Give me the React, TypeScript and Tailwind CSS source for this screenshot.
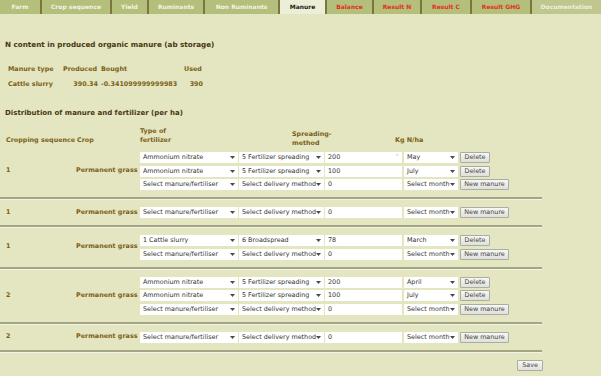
import React from 'react';

type Row = { fert: string; method: string; kg: string; month: string; btn: string; dots?: boolean };
type Group = { seq: string; rows: Row[] };

const tabs = [
  { label: 'Farm', cls: 'w-[40px] text-[#f4f3e2]' },
  { label: 'Crop sequence', cls: 'w-[70px] text-[#f4f3e2]' },
  { label: 'Yield', cls: 'w-[37px] text-[#f4f3e2]' },
  { label: 'Ruminants', cls: 'w-[56px] text-[#f4f3e2]' },
  { label: 'Non Ruminants', cls: 'w-[75px] text-[#f4f3e2]' },
  { label: 'Manure', cls: 'w-[47px] text-[#1c1c10] bg-[#eceed7]' },
  { label: 'Balance', cls: 'w-[47px] text-[#e3301c]' },
  { label: 'Result N', cls: 'w-[48px] text-[#e3301c]' },
  { label: 'Result C', cls: 'w-[50px] text-[#e3301c]' },
  { label: 'Result GHG', cls: 'w-[60px] text-[#e3301c]' },
  { label: 'Documentation', cls: 'w-[71px] text-[#eef0dc] bg-[#bfc78e]' },
];

const empty: Row = {
  fert: 'Select manure/fertiliser',
  method: 'Select delivery method',
  kg: '0',
  month: 'Select month',
  btn: 'New manure',
};

const groups: Group[] = [
  {
    seq: '1',
    rows: [
      { fert: 'Ammonium nitrate', method: '5 Fertilizer spreading', kg: '200', month: 'May', btn: 'Delete', dots: true },
      { fert: 'Ammonium nitrate', method: '5 Fertilizer spreading', kg: '100', month: 'July', btn: 'Delete' },
      empty,
    ],
  },
  { seq: '1', rows: [empty] },
  {
    seq: '1',
    rows: [{ fert: '1 Cattle slurry', method: '6 Broadspread', kg: '78', month: 'March', btn: 'Delete' }, empty],
  },
  {
    seq: '2',
    rows: [
      { fert: 'Ammonium nitrate', method: '5 Fertilizer spreading', kg: '200', month: 'April', btn: 'Delete' },
      { fert: 'Ammonium nitrate', method: '5 Fertilizer spreading', kg: '100', month: 'July', btn: 'Delete' },
      empty,
    ],
  },
  { seq: '2', rows: [empty] },
];

function Select({ text, w }: { text: string; w: string }) {
  return (
    <div className={`relative h-[11px] bg-white pl-[3px] pr-[9px] overflow-hidden whitespace-nowrap leading-[11px] text-[6.4px] text-[#333333] ${w}`}>
      {text}
      <svg className="absolute right-[3px] top-[4px]" width="5" height="3" viewBox="0 0 5 3">
        <path d="M0 0H5L2.5 3Z" fill="#4a4a4a" />
      </svg>
    </div>
  );
}

function Button({ label, w }: { label: string; w: string }) {
  return (
    <button className={`h-[11px] rounded-[1px] border border-[#acaca6] bg-gradient-to-b from-[#f7f7f4] to-[#e0e1da] text-[6.4px] leading-[9px] text-[#454545] ${w}`}>
      {label}
    </button>
  );
}

function Separator() {
  return <div className="w-[542px] h-[3px] border-t-2 border-b border-t-[#a3a584] border-b-[#f3f4e4]" />;
}

export default function App() {
  return (
    <div className="w-[601px] h-[376px] bg-[#e3e6c0] font-['DejaVu_Sans',sans-serif] overflow-hidden">
      {/* Tabs */}
      <div className="flex h-[14px] bg-[#b4bf7b]">
        {tabs.map((t, i) => (
          <div
            key={t.label}
            className={`flex items-center justify-center font-bold text-[6px] leading-[14px] ${t.cls} ${i > 0 ? 'border-l-2 border-l-[#7a763f]' : ''}`}
          >
            {t.label}
          </div>
        ))}
      </div>

      <div className="mt-[26px] pl-[5px] font-bold text-[7.2px] leading-[10px] text-[#4a3712]">
        N content in produced organic manure (ab storage)
      </div>

      {/* Manure table */}
      <div className="mt-[14px] font-bold text-[6.4px] leading-[10px] text-[#7d5e17]">
        <div className="flex">
          <div className="w-[63px] pl-[8px]">Manure type</div>
          <div className="w-[38px]">Produced</div>
          <div className="w-[83px]">Bought</div>
          <div className="w-[19px]">Used</div>
        </div>
        <div className="flex mt-[5px]">
          <div className="w-[63px] pl-[8px]">Cattle slurry</div>
          <div className="w-[35px] text-right">390.34</div>
          <div className="w-[82px] pl-[3px]">-0.341099999999983</div>
          <div className="w-[23px] text-right">390</div>
        </div>
      </div>

      <div className="mt-[19px] pl-[5px] font-bold text-[7px] leading-[10px] text-[#4a3712]">
        Distribution of manure and fertilizer (per ha)
      </div>

      {/* Distribution header */}
      <div className="mt-[9px] flex h-[18px] font-bold text-[6.4px] leading-[8.5px] text-[#7d5e17]">
        <div className="w-[76px] pl-[6px] pt-[9px]">Cropping sequence</div>
        <div className="w-[64px] pt-[9px] pl-[1px]">Crop</div>
        <div className="w-[152px]">
          Type of
          <br />
          fertilizer
        </div>
        <div className="w-[103px] pt-[3px]">
          Spreading-
          <br />
          method
        </div>
        <div className="pt-[9px]">Kg N/ha</div>
      </div>

      {/* Groups */}
      {groups.map((g, gi) => (
        <div key={gi}>
          <div className="flex items-center py-[7px] font-bold text-[6.4px] text-[#7d5e17]">
            <div className="w-[76px] pl-[6px]">{g.seq}</div>
            <div className="w-[64px] whitespace-nowrap">Permanent grass</div>
            <div className="flex flex-col gap-[2.5px] font-normal">
              {g.rows.map((r, ri) => (
                <div key={ri} className="flex items-center">
                  <Select text={r.fert} w="w-[98px]" />
                  <div className="w-[1px]" />
                  <Select text={r.method} w="w-[85px]" />
                  <div className="w-[1px]" />
                  <div className="relative h-[11px] w-[77px] bg-white pl-[3px] leading-[11px] text-[6.4px] text-[#333333]">
                    {r.kg}
                    {r.dots && (
                      <span className="absolute right-[4px] top-[-3px] text-[6px] text-[#9a9a9a] tracking-[-1px]">···</span>
                    )}
                  </div>
                  <div className="w-[2px]" />
                  <Select text={r.month} w="w-[54px]" />
                  <div className="w-[2px]" />
                  <Button label={r.btn} w={r.btn === 'Delete' ? 'w-[30px]' : 'w-[49px]'} />
                </div>
              ))}
            </div>
          </div>
          <Separator />
        </div>
      ))}

      <div className="w-[543px] flex justify-end mt-[7px]">
        <Button label="Save" w="w-[26px]" />
      </div>
    </div>
  );
}
